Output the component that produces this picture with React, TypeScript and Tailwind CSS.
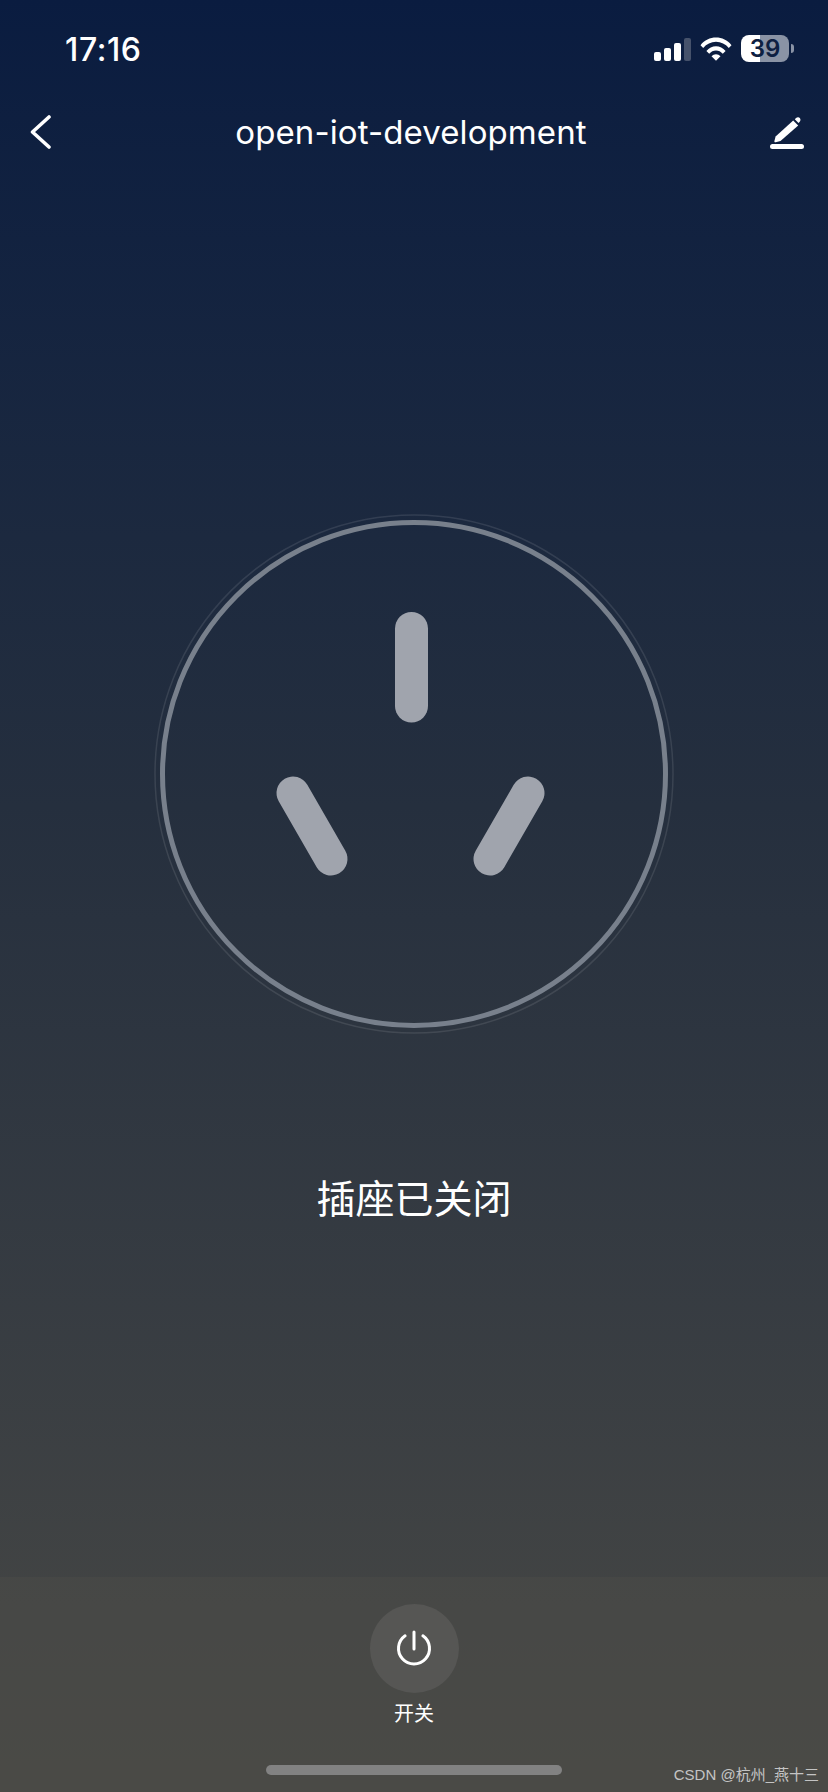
function StatusBar() {
  return (
    <div className="flex h-[86px] items-start justify-between pt-[32px] pl-[65px] pr-[34px]">
      <span className="text-[32px] leading-[36px] font-medium tracking-[0.6px] text-white">17:16</span>
      <div className="flex items-center gap-[9px] pt-[3px]">
        <svg width="37" height="23" viewBox="0 0 37 23" className="mt-[1px]">
          <rect x="0" y="14" width="7" height="9" rx="2" fill="#fff" />
          <rect x="10" y="10" width="7" height="13" rx="2" fill="#fff" />
          <rect x="20" y="5" width="7" height="18" rx="2" fill="#fff" />
          <rect x="30" y="0" width="7" height="23" rx="2" fill="#46526b" />
        </svg>
        <svg width="32" height="24" viewBox="0 0 32 24" fill="#fff" className="mt-[1px]">
          <path d="M0.5 8.2C4.6 3.2 10 0.6 16 0.6s11.4 2.6 15.5 7.6l-2.7 2.7C25.5 7 21 4.7 16 4.7S6.5 7 3.2 10.9L0.5 8.2z" />
          <path d="M6.4 14C9 10.9 12.300 9.300 16 9.300s7 1.600 9.600 4.700l-2.800 2.800C21 14.600 18.600 13.400 16 13.400s-5 1.200-6.800 3.400L6.400 14z" />
          <path d="M11.500 19.200c1.200-1.300 2.800-2 4.500-2s3.300 0.700 4.500 2L16 23.700l-4.500-4.500z" />
        </svg>
        <div className="flex items-center gap-[2px]">
          <div className="relative h-[27px] w-[48px] rounded-[8px] bg-[linear-gradient(to_right,#fff_19px,#8a93a5_19px)]">
            <div className="flex h-full items-center justify-center text-[24px] leading-[27px] font-semibold text-[#0e2042]">
              39
            </div>
          </div>
          <div className="h-[9px] w-[3px] rounded-r-full bg-[#8a93a5]" />
        </div>
      </div>
    </div>
  )
}

function NavBar() {
  return (
    <div className="flex h-[92px] items-start justify-between pt-[22px] pl-[30px] pr-[24px]">
      <svg width="22" height="36" viewBox="0 0 22 36" fill="none" stroke="#fff" strokeWidth="3.600" strokeLinecap="round" strokeLinejoin="round" className="mt-[6px]">
        <path d="M19 3 2.500 18 19 33" />
      </svg>
      <span className="text-[33px] leading-[48px] tracking-[0.1px] text-white">open-iot-development</span>
      <svg width="34" height="32" viewBox="0 0 34 32" fill="#fff" className="mt-[9px]">
        <path d="M25.800 1.300c1.200-1.200 3-1.300 4-0.300s0.900 2.800-0.300 4l-1 1-3.700-3.700 1-1z" />
        <path d="M23.200 3.500 28.200 8.500 10.500 24l-4.800 1.300c-0.900 0.200-1.500-0.400-1.300-1.300l1.200-4.400L23.200 3.500z" />
        <rect x="0" y="27" width="34" height="5" rx="2.500" />
      </svg>
    </div>
  )
}

function SocketDial() {
  return (
    <svg width="520" height="520" viewBox="0 0 520 520" fill="none">
      <circle cx="260" cy="260" r="259" stroke="#ffffff" strokeOpacity="0.1" strokeWidth="1.500" />
      <circle cx="260" cy="260" r="251.500" stroke="#78808c" strokeWidth="5" />
      <g stroke="#a0a4ad" strokeWidth="33" strokeLinecap="round">
        <path d="M257.500 114.500V192" />
        <path d="M139 279 177 345" />
        <path d="M374 279 336 345" />
      </g>
    </svg>
  )
}

function PowerButton() {
  return (
    <div className="flex flex-col items-center">
      <div className="flex h-[89px] w-[89px] items-center justify-center rounded-full bg-[#565654]">
        <svg width="38" height="38" viewBox="0 0 38 38" fill="none" stroke="#fff" strokeWidth="3" strokeLinecap="round">
          <path d="M19 2V19" />
          <path d="M10.100 5.800a15.500 15.500 0 1 0 17.800 0" />
        </svg>
      </div>
      <span className="mt-[9px] text-[20px] leading-[24px] text-white">开关</span>
    </div>
  )
}

export default function App() {
  return (
    <div
      className="relative flex h-[1792px] w-[828px] flex-col overflow-hidden bg-linear-to-b from-[#0a1c40] via-[#252f3e] via-45% to-[#494945]"
      style={{ fontFamily: 'Inter, "Noto Sans CJK SC", sans-serif' }}
    >
      <StatusBar />
      <NavBar />
      <div className="flex flex-1 flex-col items-center">
        <div className="mt-[336px]">
          <SocketDial />
        </div>
        <p className="mt-[139px] text-[39px] leading-[52px] text-white">插座已关闭</p>
      </div>
      <div className="flex h-[215px] flex-col items-center bg-[#4c4c47]/50 pt-[27px]">
        <PowerButton />
        <div className="mt-[39px] h-[10px] w-[296px] rounded-full bg-[#828282]" />
      </div>
      {/* watermark sits over the panel */}
      <span
        className="absolute right-[9px] bottom-[7px] text-[15px] leading-[20px] text-[#c4c4c4]"
        style={{ fontFamily: '"Liberation Sans", "Noto Sans CJK SC", sans-serif' }}
      >
        CSDN @杭州_燕十三
      </span>
    </div>
  )
}
